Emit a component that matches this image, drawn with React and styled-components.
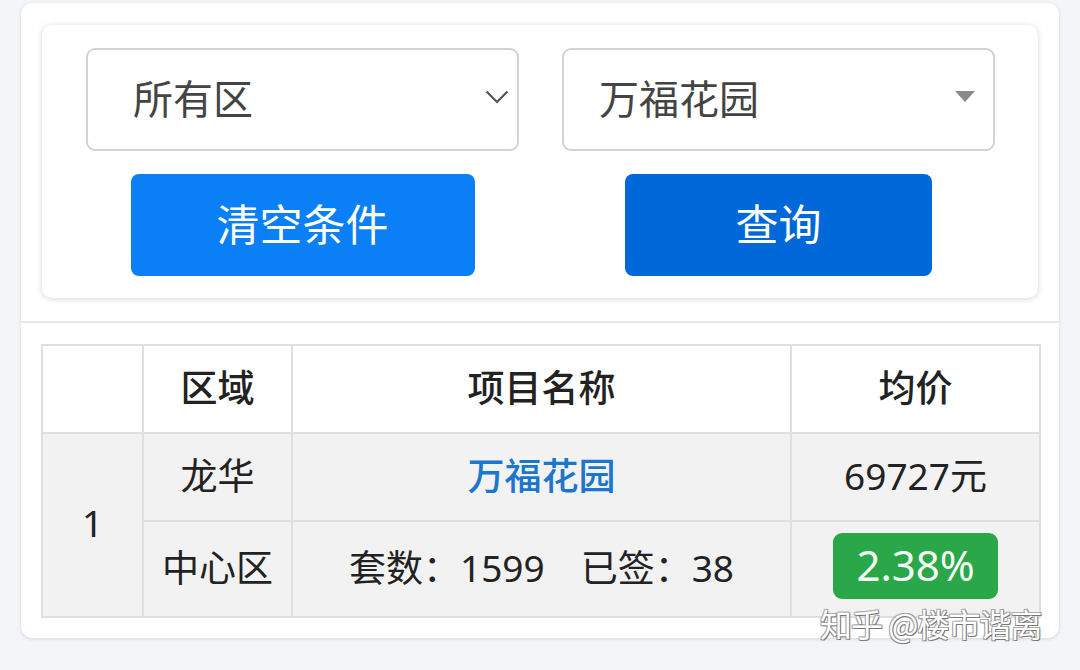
import React from "react";
import styled, { createGlobalStyle } from "styled-components";

const Global = createGlobalStyle`
  html, body { margin: 0; padding: 0; }
  body {
    background: #f4f5f8;
    font-family: "Noto Sans CJK SC", "Noto Sans", sans-serif;
    width: 1080px;
    height: 670px;
    overflow: hidden;
  }
  * { box-sizing: border-box; }
`;

const Page = styled.div`
  position: relative;
  padding: 3px 21px 0 21px;
  height: 670px;
`;

const OuterCard = styled.div`
  background: #fff;
  border-radius: 12px;
  box-shadow: 0 1px 4px rgba(0, 0, 0, 0.12);
  width: 1038px;
  height: 635px;
  display: flex;
  flex-direction: column;
`;

const TopSection = styled.div`
  padding: 22px 21px 23px 21px;
  border-bottom: 2px solid #e6e7e9;
`;

const FilterCard = styled.div`
  background: #fff;
  border-radius: 10px;
  box-shadow: 0 1px 6px rgba(0, 0, 0, 0.16);
  padding: 23px 43px 22px 44px;
  display: grid;
  grid-template-columns: 433px 433px;
  column-gap: 43px;
  row-gap: 23px;
  height: 273px;
`;

const Select = styled.div`
  height: 103px;
  border: 2px solid #d3d3d5;
  border-radius: 9px;
  display: flex;
  align-items: center;
  justify-content: space-between;
  padding: 0 ${(p) => p.$padRight}px 6px ${(p) => p.$padLeft}px;
  font-size: 40px;
  color: #444;
`;

const Cell = styled.div`
  display: flex;
  justify-content: center;
`;

const Button = styled.button`
  width: ${(p) => p.$w}px;
  height: 102px;
  border: none;
  border-radius: 8px;
  background: ${(p) => p.$bg};
  color: #fff;
  font-family: "Noto Sans CJK SC", "Noto Sans", sans-serif;
  font-size: 43px;
  padding: 0 0 6px 0;
`;

const BottomSection = styled.div`
  padding: 21px 20px 0 20px;
`;

const Table = styled.table`
  width: 998px;
  border-collapse: collapse;
  font-family: "Noto Sans", "Noto Sans CJK SC", sans-serif;
  font-size: 37px;
  color: #222;
  table-layout: fixed;
`;

const Th = styled.th`
  height: 88px;
  border: 2px solid #dedfe1;
  font-weight: 500;
  background: #fff;
  padding: 0 0 6px 0;
  text-align: center;
`;

const Td = styled.td`
  height: ${(p) => p.$h || 88}px;
  border: 2px solid #dedfe1;
  background: #f2f2f2;
  text-align: center;
  padding: 0 0 6px 0;
  font-weight: 400;
`;

const Link = styled.span`
  color: #1b76cc;
  font-weight: 500;
`;

const Badge = styled.span`
  display: inline-flex;
  align-items: center;
  justify-content: center;
  background: #2aa748;
  color: #f4fff6;
  border-radius: 9px;
  width: 165px;
  height: 66px;
  font-family: "Noto Sans", sans-serif;
  font-size: 42px;
  padding-bottom: 3px;
`;

const Gap = styled.span`
  display: inline-block;
  width: 36px;
`;

const Watermark = styled.div`
  position: absolute;
  left: 820px;
  top: 600px;
  font-size: 32px;
  color: #fff;
  white-space: nowrap;
  text-shadow: 1px 1px 0 #777, -1px -1px 0 #aaa, 1px -1px 0 #999, -1px 1px 0 #999;
  letter-spacing: -1px;
`;

const Chevron = () => (
  <svg width="24" height="14" viewBox="0 0 24 14" fill="none">
    <path d="M1.5 1.5 L12 12 L22.5 1.5" stroke="#555" strokeWidth="2.2" />
  </svg>
);

const Caret = () => (
  <svg width="20" height="12" viewBox="0 0 20 12">
    <path d="M0 0 H20 L10 11 Z" fill="#8a8a8a" />
  </svg>
);

export default function App() {
  return (
    <>
      <Global />
      <Page>
        <OuterCard>
          <TopSection>
            <FilterCard>
              <Select $padLeft={45} $padRight={8}>
                <span>所有区</span>
                <Chevron />
              </Select>
              <Select $padLeft={35} $padRight={18}>
                <span>万福花园</span>
                <Caret />
              </Select>
              <Cell>
                <Button $w={344} $bg="#0a7ff6">清空条件</Button>
              </Cell>
              <Cell>
                <Button $w={307} $bg="#0068d8">查询</Button>
              </Cell>
            </FilterCard>
          </TopSection>
          <BottomSection>
            <Table>
              <colgroup>
                <col style={{ width: 101 }} />
                <col style={{ width: 149 }} />
                <col style={{ width: 499 }} />
                <col style={{ width: 249 }} />
              </colgroup>
              <thead>
                <tr>
                  <Th></Th>
                  <Th>区域</Th>
                  <Th>项目名称</Th>
                  <Th>均价</Th>
                </tr>
              </thead>
              <tbody>
                <tr>
                  <Td rowSpan={2}>1</Td>
                  <Td>龙华</Td>
                  <Td><Link>万福花园</Link></Td>
                  <Td>69727元</Td>
                </tr>
                <tr>
                  <Td $h={96}>中心区</Td>
                  <Td $h={96}>套数：1599<Gap />已签：38</Td>
                  <Td $h={96}><Badge>2.38%</Badge></Td>
                </tr>
              </tbody>
            </Table>
          </BottomSection>
        </OuterCard>
        <Watermark>知乎 @楼市谐离</Watermark>
      </Page>
    </>
  );
}
